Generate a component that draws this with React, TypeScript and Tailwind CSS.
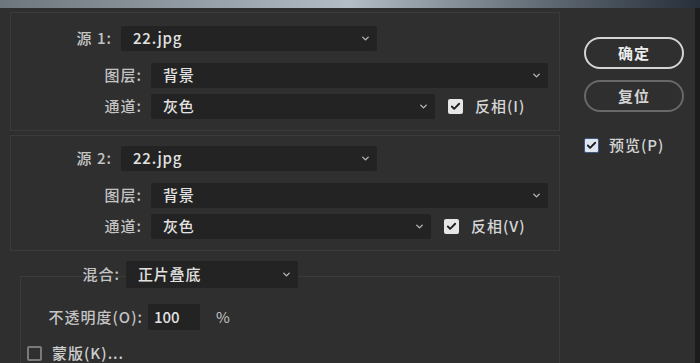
import React from 'react';
import { ChevronDown, Check } from 'lucide-react';

const font = { fontFamily: '"Noto Sans CJK SC", "Noto Sans", sans-serif' };

const Select: React.FC<{ value: string; className: string }> = ({ value, className }) => (
  <div className={`flex items-center justify-between bg-[#232323] rounded-[2px] pl-[12px] pr-[6px] text-[15px] tracking-[0.8px] text-[#e2e2e2] ${className}`}>
    <span className="font-medium">{value}</span>
    <ChevronDown className="w-[11px] h-[11px] text-[#b8b8b8]" strokeWidth={3} />
  </div>
);

const CheckBox: React.FC<{ checked?: boolean; blue?: boolean }> = ({ checked, blue }) => (
  <div
    className={`flex items-center justify-center w-[15px] h-[15px] rounded-[2px] shrink-0 ${
      checked
        ? blue
          ? 'bg-[#dfe6ef] border border-[#3d5a85]'
          : 'bg-[#e6e6e6]'
        : 'border-2 border-[#7a7a7a]'
    }`}
  >
    {checked && <Check className="w-[11px] h-[11px] text-[#1c1c1c]" strokeWidth={4} />}
  </div>
);

const Label: React.FC<{ text: string; w: string }> = ({ text, w }) => (
  <div className={`${w} text-right text-[15px] tracking-[1px] text-[#c4c4c4] font-medium shrink-0 whitespace-nowrap`}>{text}</div>
);

const SourceGroup: React.FC<{ n: string; inv: string; chW: string; cls: string }> = ({ n, inv, chW, cls }) => (
  <div className={`border border-[#3b3b3b] ${cls}`}>
    <div className="flex items-center h-[24px]">
      <Label text={`源 ${n}:`} w="w-[101px]" />
      <Select value="22.jpg" className="ml-[9px] w-[256px] h-[25px]" />
    </div>
    <div className="flex items-center h-[25px] mt-[13px]">
      <Label text="图层:" w="w-[131px]" />
      <Select value="背景" className="ml-[9px] w-[397px] h-[25px]" />
    </div>
    <div className="flex items-center h-[25px] mt-[6px]">
      <Label text="通道:" w="w-[131px]" />
      <Select value="灰色" className={`ml-[9px] ${chW} h-[25px]`} />
      <div className="ml-[13px]"><CheckBox checked /></div>
      <span className="ml-[12px] text-[15px] tracking-[1px] text-[#d6d6d6] font-medium">{inv}</span>
    </div>
  </div>
);

export default function App() {
  return (
    <div className="w-[700px] h-[363px] overflow-hidden bg-[#2f2f2f] flex flex-col" style={font}>
      <div className="h-[8px] shrink-0 bg-gradient-to-r from-[#6d767d] via-[#b3bdc5] to-[#27303a]" />
      <div className="flex flex-1 border-r-[5px] border-[#1c1c1c]">
        <div className="w-[560px] pl-[10px] pt-[4px] flex flex-col">
          <SourceGroup n="1" inv="反相(I)" chW="w-[284px]" cls="pt-[13px] pb-[11px]" />
          <SourceGroup n="2" inv="反相(V)" chW="w-[280px]" cls="mt-[4px] pt-[10px] pb-[11px]" />
          <div className="mt-[10px] flex flex-col">
            <div className="relative z-10 flex items-center h-[27px]">
              <Label text="混合:" w="w-[110px]" />
              <Select value="正片叠底" className="ml-[6px] w-[172px] h-[27px]" />
            </div>
            <div className="-mt-[12px] ml-[10px] flex-1 border-t border-l border-r border-[#3b3b3b] pt-[27px]">
              <div className="flex items-center h-[26px]">
                <Label text="不透明度(O):" w="w-[122px]" />
                <div className="ml-[5px] w-[52px] h-[26px] bg-[#232323] rounded-[2px] flex items-center pl-[6px] text-[15px] text-[#e2e2e2] font-medium">100</div>
                <span className="ml-[16px] text-[15px] text-[#c4c4c4]">%</span>
              </div>
              <div className="flex items-center mt-[12px] ml-[6px]">
                <CheckBox />
                <span className="ml-[10px] text-[15px] tracking-[1px] text-[#cfcfcf] font-medium">蒙版(K)...</span>
              </div>
            </div>
          </div>
        </div>
        <div className="flex-1 pl-[24px] pt-[29px] flex flex-col">
          <button className="w-[100px] h-[32px] rounded-full border-2 border-[#d4d4d4] text-[15px] tracking-[1px] text-[#ececec] font-bold">确定</button>
          <button className="mt-[11px] w-[100px] h-[32px] rounded-full border-2 border-[#686868] text-[15px] tracking-[1px] text-[#d4d4d4] font-bold">复位</button>
          <div className="mt-[22px] flex items-center">
            <CheckBox checked blue />
            <span className="ml-[10px] text-[15px] tracking-[1px] text-[#d4d4d4] font-medium">预览(P)</span>
          </div>
        </div>
      </div>
    </div>
  );
}
